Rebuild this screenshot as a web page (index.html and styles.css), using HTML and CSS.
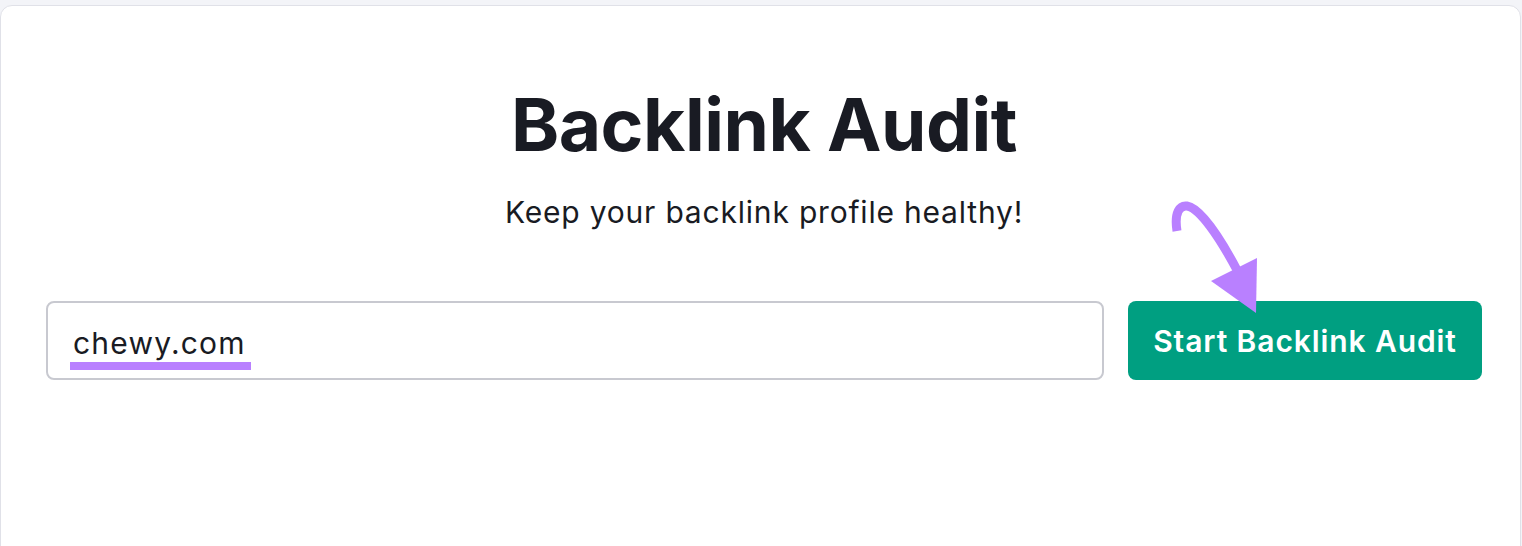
FILE: index.html
```html
<!DOCTYPE html>
<html lang="en">
<head>
<meta charset="utf-8">
<title>Backlink Audit</title>
<link rel="stylesheet" href="styles.css">
</head>
<body>
<main class="card">
  <h1 class="title">Backlink Audit</h1>
  <p class="subtitle">Keep your backlink profile healthy!</p>
  <div class="form-row">
    <div class="field">
      <span class="field-value">chewy.com</span>
    </div>
    <button class="start-btn" type="button">Start Backlink Audit</button>
  </div>
  <svg class="arrow" viewBox="1160 190 110 130" width="110" height="130" aria-hidden="true">
    <path d="M1176 231 C1173 212 1179 205 1186 206 C1199 208 1219 238 1236 270" fill="none" stroke="#b980ff" stroke-width="9"/>
    <polygon points="1210,281 1256,258 1255,313" fill="#b980ff"/>
  </svg>
</main>
</body>
</html>
```

FILE: styles.css
```css
html, body {
  margin: 0;
  padding: 0;
}
body {
  background: #f3f4f8;
  font-family: Inter, "Noto Sans", "Liberation Sans", sans-serif;
  color: #191b23;
  height: 546px;
  overflow: hidden;
}
.card {
  position: relative;
  margin-top: 5px;
  width: 1521px;
  height: 560px;
  background: #ffffff;
  border: 1px solid #e0e1e8;
  border-radius: 12px 12px 0 0;
  padding: 74px 38px 0 45px;
  box-sizing: border-box;
}
.title {
  margin: 0;
  text-align: center;
  font-size: 73px;
  line-height: 90px;
  font-weight: 700;
  letter-spacing: -0.5px;
  color: #191b23;
}
.subtitle {
  margin: 24px 0 0;
  text-align: center;
  font-size: 30px;
  line-height: 36px;
  font-weight: 400;
  letter-spacing: 0.8px;
  color: #191b23;
}
.form-row {
  margin-top: 71px;
  display: flex;
  gap: 24px;
  height: 79px;
}
.field {
  flex: 1;
  border: 2px solid #c8c9d0;
  border-radius: 8px;
  display: flex;
  align-items: center;
  padding: 4px 0 0 25px;
  box-sizing: border-box;
}
.field-value {
  position: relative;
  font-size: 30px;
  line-height: 36px;
  letter-spacing: 1.2px;
  color: #191b23;
}
.field-value::after {
  content: "";
  position: absolute;
  left: -3px;
  right: -5px;
  bottom: -9px;
  height: 8px;
  background: #b980ff;
}
.start-btn {
  width: 354px;
  border: none;
  border-radius: 8px;
  background: #009f81;
  color: #ffffff;
  font-family: Inter, "Noto Sans", "Liberation Sans", sans-serif;
  font-size: 30px;
  font-weight: 600;
  letter-spacing: 0.9px;
  padding: 0;
  cursor: pointer;
}
.arrow {
  position: absolute;
  left: 1160px;
  top: 184px;
  overflow: visible;
}
```
